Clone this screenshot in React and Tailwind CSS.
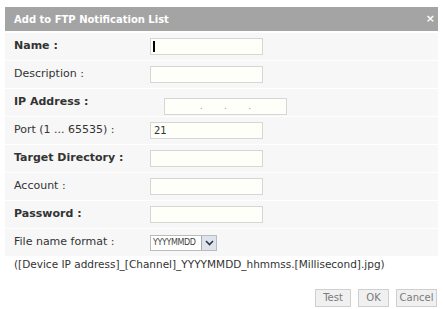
import React from "react";

const font = { fontFamily: '"DejaVu Sans", Verdana, sans-serif' };

const Row = ({ label, bold, children }) => (
  <div className="flex items-center h-[28px] bg-[#f7f7f7] border-b border-white">
    <div
      className={`w-[145px] pl-[9px] text-[11px] text-[#333] ${
        bold ? "font-semibold" : ""
      }`}
    >
      {label}
    </div>
    {children}
  </div>
);

const TextBox = ({ value, cursor }) => (
  <div className="relative w-[113px] h-[17px] bg-[#fffffa] border border-[#d6d6d6] text-[10px] text-[#333] pl-[3px] leading-[15px]">
    {cursor && (
      <span className="absolute left-[2px] top-[2px] w-[2px] h-[11px] bg-black" />
    )}
    {value}
  </div>
);

const App = () => {
  return (
    <div className="w-[443px] h-[309px] bg-white pt-[7px] px-[5px]" style={font}>
      <div className="flex items-center justify-between h-[24px] bg-[#a4a4a4] pl-[9px] pr-[3px]">
        <span className="text-white font-bold text-[10px]">
          Add to FTP Notification List
        </span>
        <span className="text-white text-[11px] font-bold">×</span>
      </div>

      <div className="pt-[2px]">
        <Row label="Name :" bold>
          <TextBox cursor />
        </Row>
        <Row label="Description :">
          <TextBox />
        </Row>
        <Row label="IP Address :" bold>
          <div className="ml-[14px] mt-[8px] w-[123px] h-[17px] bg-[#fffffa] border border-[#d6d6d6] flex items-center justify-around px-[24px] text-[8px] text-[#888]">
            <span>.</span>
            <span>.</span>
            <span>.</span>
          </div>
        </Row>
        <Row label="Port (1 ... 65535) :">
          <TextBox value="21" />
        </Row>
        <Row label="Target Directory :" bold>
          <TextBox />
        </Row>
        <Row label="Account :">
          <TextBox />
        </Row>
        <Row label="Password :" bold>
          <TextBox />
        </Row>
        <Row label="File name format :">
          <div className="flex h-[16px] border border-[#bbb] bg-white">
            <div className="w-[50px] text-[8px] tracking-[-0.4px] text-[#444] leading-[14px] pl-[2px] whitespace-nowrap">
              YYYYMMDD
            </div>
            <div className="w-[15px] border-l border-[#aaa] bg-[#dde4ee] flex items-center justify-center">
              <svg width="9" height="6" viewBox="0 0 9 6">
                <path d="M1 1 L4.5 4.5 L8 1" stroke="#334" strokeWidth="1.6" fill="none" />
              </svg>
            </div>
          </div>
        </Row>
        <div className="pl-[9px] text-[10.5px] text-[#333] whitespace-nowrap">
          ([Device IP address]_[Channel]_YYYYMMDD_hhmmss.[Millisecond].jpg)
        </div>
      </div>

      <div className="flex justify-end gap-[7px] mt-[16px] pr-[1px]">
        {[
          ["Test", "w-[36px]"],
          ["OK", "w-[31px]"],
          ["Cancel", "w-[41px]"],
        ].map(([b, w]) => (
          <button
            key={b}
            className={`${w} h-[18px] bg-[#f0f0f0] border border-[#cfcfcf] text-[10px] text-[#7a7a7a]`}
          >
            {b}
          </button>
        ))}
      </div>
    </div>
  );
};

export default App;
